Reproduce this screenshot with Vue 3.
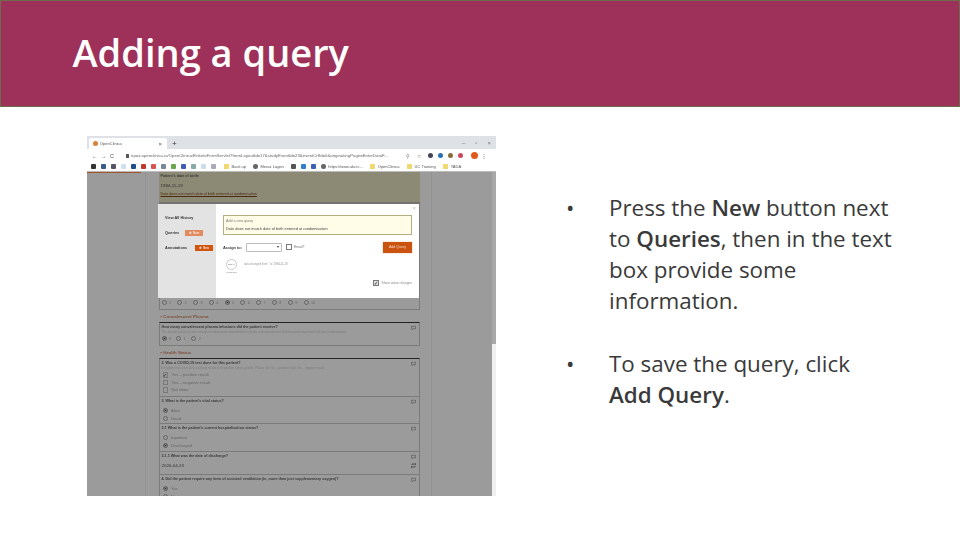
<script setup>
const bookmarks = ['#333', '#3b5a8c', '#556', '#cfe0f0', '#1f4e8c', '#c0392b', '#d9534f', '#789', '#6aa84f', '#3f5fb5', '#8aa', '#cde', '#aab']
const scale = [1, 2, 3, 4, 5, 6, 7, 8, 9, 10]
const vital = [
  { q: '3. What is the patient\'s vital status?', opts: [{ t: 'Alive', on: true }, { t: 'Dead' }], h: 27 },
  { q: '3.1 What is the patient\'s current hospitalisation status?', opts: [{ t: 'Inpatient' }, { t: 'Discharged', on: true }], h: 28 },
]
const tests = ['Yes – positive result', 'Yes – negative result', 'Not done']
</script>

<template>
  <div class="slide">
    <header class="banner">
      <h1>Adding a query</h1>
    </header>
    <main class="content">
      <div class="shot">
        <div class="tabstrip">
          <div class="tab"><span class="fav"></span>OpenClinica<span class="tabx">×</span></div>
          <span class="plus">+</span>
          <span class="winbtns"><i>–</i><i>▫</i><i>×</i></span>
        </div>
        <div class="addr">
          <span class="nav">← → C</span>
          <span class="lock"></span>
          <span class="url">npox.openclinica.io/OpenClinica/EnketoFormServlet?formLayoutId=17&amp;studyEventId=23&amp;eventCrfId=0&amp;originatingPage=EnterDataF...</span>
          <span class="star">⚲</span>
          <span class="star">☆</span>
          <span class="exts"><b class="e1"></b><b class="e2"></b><b class="e3"></b><b class="e4"></b><b class="e5"></b></span>
          <span class="dots">⋮</span>
        </div>
        <div class="marks">
          <span v-for="(c, i) in bookmarks" :key="i" class="mk" :style="{ background: c }"></span>
          <span class="fold"></span><span>Back up</span>
          <span class="globe"></span><span>Meraz Logon</span>
          <span class="mk m2" style="background:#555"></span>
          <span class="mk m3" style="background:#2f80c9"></span>
          <span class="mk m3" style="background:#3f5fb5"></span>
          <span class="globe g2"></span><span>https://www.ukcrc...</span>
          <span class="fold f2"></span><span>OpenClinica</span>
          <span class="fold f2"></span><span>UC Training</span>
          <span class="fold f2"></span><span>TADA</span>
        </div>

        <div class="page">
          <div class="rule"></div>
          <div class="col">
            <div class="form">
              <div class="patient">
                <p class="q">Patient's date of birth:</p>
                <p class="val">1984-11-19</p>
                <p class="err">Date does not match date of birth entered at randomisation</p>
              </div>
              <div class="gaprow">
                <div class="radios">
                  <span v-for="n in scale" :key="n" class="ropt"><i class="radio" :class="{ on: n === 5 }"></i>{{ n }}</span>
                </div>
              </div>

              <div class="section">▪ Convalescent Plasma</div>
              <div class="box plasma">
                <p class="q">How many convalescent plasma infusions did the patient receive?</p>
                <p class="hint">This should include all units infused, including those started before transfer, and any infusions that the patient may have had since randomisation</p>
                <div class="radios">
                  <span v-for="n in [0, 1, 2]" :key="n" class="ropt"><i class="radio" :class="{ on: n === 0 }"></i>{{ n }}</span>
                </div>
                <svg class="cmt" viewBox="0 0 10 10"><path d="M1 2.5h8v5H4L2 9.2V7.500H1z" fill="none" stroke="#4c4c4c" stroke-width="1.100"/></svg>
              </div>

              <div class="section">▪ Health Status</div>
              <div class="box health">
                <p class="q">2. Was a COVID-19 test done for this patient?</p>
                <p class="hint">If multiple tests were done, and any results were positive, select positive. Please tick Yes – positive result, Yes – negative result</p>
                <div v-for="(t, i) in tests" :key="t" class="opt"><i class="check" :class="{ on: i === 0 }">{{ i === 0 ? '✓' : '' }}</i>{{ t }}</div>
                <svg class="cmt" viewBox="0 0 10 10"><path d="M1 2.5h8v5H4L2 9.2V7.500H1z" fill="none" stroke="#4c4c4c" stroke-width="1.100"/></svg>
              </div>
              <div v-for="v in vital" :key="v.q" class="box row" :style="{ height: v.h + 'px' }">
                <p class="q">{{ v.q }}</p>
                <div v-for="o in v.opts" :key="o.t" class="opt"><i class="radio" :class="{ on: o.on }"></i>{{ o.t }}</div>
                <svg class="cmt" viewBox="0 0 10 10"><path d="M1 2.5h8v5H4L2 9.2V7.500H1z" fill="none" stroke="#4c4c4c" stroke-width="1.100"/></svg>
              </div>
              <div class="box row date">
                <p class="q">3.1.1 What was the date of discharge?</p>
                <p class="val">2020-04-23</p>
                <svg class="cmt" viewBox="0 0 10 10"><path d="M1 2.5h8v5H4L2 9.2V7.500H1z" fill="none" stroke="#4c4c4c" stroke-width="1.100"/></svg>
                <svg class="sync" viewBox="0 0 10 10"><path d="M2 4V2h6.500M8.500 0.500L10 2 8.500 3.500M8 6v2H1.500M1.500 6.500L0 8l1.500 1.500M8 2.500V4M2 6V7.500" fill="none" stroke="#333" stroke-width="1.300"/></svg>
              </div>
              <div class="box row last">
                <p class="q">4. Did the patient require any form of assisted ventilation (ie, more than just supplementary oxygen)?</p>
                <div class="opt"><i class="radio on"></i>Yes</div>
                <div class="opt"><i class="radio"></i>No</div>
                <svg class="cmt" viewBox="0 0 10 10"><path d="M1 2.5h8v5H4L2 9.2V7.500H1z" fill="none" stroke="#4c4c4c" stroke-width="1.100"/></svg>
              </div>
            </div>
          </div>
          <div class="scroll"><span class="thumb"></span></div>

          <div class="modal">
            <aside class="side">
              <p class="hist">View All History</p>
              <p class="lab">Queries <span class="btn light">✚ New</span></p>
              <p class="lab">Annotations <span class="btn">✚ New</span></p>
            </aside>
            <div class="mbody">
              <span class="close">×</span>
              <div class="note">
                <p class="ph">Add a new query</p>
                <p class="txt">Date does not match date of birth entered at randomisation</p>
              </div>
              <div class="assign">
                <b>Assign to:</b>
                <span class="sel">▾</span>
                <i class="check small"></i>
                <span class="em">Email?</span>
                <span class="add">Add Query</span>
              </div>
              <div class="log">
                <div class="who"><span class="av">CRAY</span><small>2 minutes</small></div>
                <span class="chg">data changed from '' to '1984-11-19'</span>
              </div>
              <div class="show"><i class="check small on">✓</i>Show value changes</div>
            </div>
          </div>
        </div>
      </div>

      <ul class="points">
        <li>Press the <b>New</b> button next to <b>Queries</b>, then in the text box provide some information.</li>
        <li>To save the query, click <b class="keep">Add Query</b>.</li>
      </ul>
    </main>
  </div>
</template>

<style scoped>
.slide { width: 960px; height: 540px; background: #fff; overflow: hidden; font-family: "Open Sans", sans-serif; }
.banner { height: 107px; box-sizing: border-box; background: #9e3159; border: 1.5px solid #6e6a4c; padding: 28px 0 0 71.500px; }
h1 { margin: 0; color: #fff; font-size: 38px; line-height: 46px; font-weight: 600; }
.content { display: flex; padding: 29px 0 0 87px; }
.shot { position: relative; width: 409px; height: 360px; display: flex; flex-direction: column; overflow: hidden; filter: blur(.5px); font-family: "Liberation Sans", sans-serif; color: #333; }
p { margin: 0; }
i { font-style: normal; }

.tabstrip { height: 13px; background: #dee1e6; display: flex; align-items: flex-end; font-size: 4px; padding-left: 2px; flex: none; }
.tab { width: 78px; height: 11px; background: #fff; border-radius: 2px 2px 0 0; display: flex; align-items: center; gap: 2px; padding-left: 4px; box-sizing: border-box; color: #555; }
.fav { width: 5px; height: 5px; border-radius: 50%; background: #d8813c; }
.tabx { margin-left: auto; margin-right: 5px; font-size: 6px; }
.plus { font-size: 8px; margin: 0 0 1px 5px; color: #333; }
.winbtns { margin-left: auto; display: flex; gap: 10px; padding: 0 5px 3px 0; font-size: 6px; color: #777; }
.addr { height: 13px; background: #fff; display: flex; align-items: center; padding: 0 3px 0 5px; font-size: 4.300px; flex: none; color: #666; }
.nav { font-size: 5.500px; word-spacing: 2px; width: 34px; flex: none; color: #555; }
.lock { width: 3px; height: 4px; background: #555; border-radius: .5px; margin-right: 2px; flex: none; }
.url { white-space: nowrap; overflow: hidden; width: 271px; flex: none; }
.star { width: 11px; text-align: center; font-size: 5px; flex: none; }
.exts { display: flex; gap: 5px; align-items: center; margin-left: 4px; }
.exts b { width: 5px; height: 5px; border-radius: 50%; background: #445; }
.exts .e2 { background: #2a6fb5; }
.exts .e3 { background: #8a6b3a; }
.exts .e4 { background: #d0455c; }
.exts .e5 { background: #e0591b; width: 7px; height: 7px; margin-left: 3px; }
.dots { margin-left: 3px; font-size: 6px; }
.marks { height: 10px; background: #fff; display: flex; align-items: center; gap: 2.500px; padding-left: 4px; font-size: 4px; color: #555; white-space: nowrap; flex: none; border-bottom: .5px solid #bbb; box-sizing: border-box; }
.mk { width: 4.500px; height: 4.500px; border-radius: 1px; margin-right: 3px; flex: none; }
.m2 { margin-left: 5px; }
.fold { width: 5px; height: 4.500px; background: #f1d873; margin-left: 3px; border-radius: .5px; flex: none; }
.f2 { margin-left: 5px; }
.globe { width: 4.500px; height: 4.500px; border-radius: 50%; background: #666; margin-left: 5px; flex: none; }
.g2 { margin-left: 0; }

.page { position: relative; flex: 1; background: #9b9b9b; display: flex; min-height: 0; }
.rule { position: absolute; left: 0; top: 0; width: 54px; height: 1px; background: #a0562a; }
.col { width: 287px; margin-left: 58px; border-left: 1px solid #929292; border-right: 1px solid #929292; height: 100%; box-sizing: border-box; padding-left: 12.500px; flex: none; }
.form { width: 261px; font-size: 3.700px; color: #2d2d2d; }
.scroll { margin-left: auto; width: 4px; background: #efefef; position: relative; }
.thumb { position: absolute; left: 0; top: 0; width: 4px; height: 172px; background: #a8a8a8; }

.patient { height: 32px; box-sizing: border-box; background: #8c8975; padding: 2px 2px; border-bottom: 2px solid #737373; }
.val { font-size: 4.400px; margin-top: 3.500px; color: #333; }
.err { margin-top: 4.500px; color: #4d2b10; text-decoration: underline; }
.q { color: #3a3a3a; font-weight: 700; font-size: 3.700px; line-height: 5px; }
.hint { color: #7d7d7d; font-size: 2.900px; line-height: 4px; }
.gaprow { height: 106px; box-sizing: border-box; padding: 96px 2px 0; border: 1px solid #7b7b7b; border-top: 0; }
.radios { display: flex; gap: 6.400px; color: #666; font-size: 3.600px; }
.ropt { display: flex; align-items: center; gap: 2.400px; }
.radio { display: inline-block; width: 5px; height: 5px; box-sizing: border-box; border: .6px solid #666; border-radius: 50%; flex: none; }
.radio.on { background: #2d2d2d; box-shadow: inset 0 0 0 .7px #9b9b9b; }
.check { display: inline-flex; align-items: center; justify-content: center; width: 5.500px; height: 5.500px; box-sizing: border-box; border: .6px solid #7a7a7a; flex: none; font-size: 5px; color: #222; }

.section { height: 12px; box-sizing: border-box; padding: 4px 2px 0; font-size: 4.400px; font-weight: 700; color: #80513a; line-height: 6px; }
.box { position: relative; border: 1px solid #7b7b7b; border-top-width: 0; box-sizing: border-box; padding: 2px 2px 0; }
.plasma, .health { border-top: 1.400px solid #222; }
.plasma { height: 24px; }
.plasma .radios { margin-top: 2px; gap: 5.500px; }
.health { height: 39px; }
.opt { display: flex; align-items: center; gap: 3.500px; height: 7.500px; color: #666; font-size: 4.200px; padding-left: 1px; }
.hint + .opt { margin-top: 1px; }
.q + .opt { margin-top: 2px; }
.row .opt { height: 8px; }
.cmt { position: absolute; right: 3px; top: 1.500px; width: 5px; height: 5px; }
.sync { position: absolute; right: 3px; top: 11px; width: 5px; height: 5px; }
.date { height: 23px; }
.date .val { margin-top: 4px; }
.last { border-bottom: 0; height: 30px; }

.modal { position: absolute; left: 71px; top: 32px; width: 261px; height: 94px; display: flex; background: #fff; }
.side { width: 58px; background: #e3e3e3; flex: none; padding: 12px 0 0 7px; box-sizing: border-box; font-size: 3.800px; font-weight: 700; color: #333; }
.side .hist { margin-bottom: 9px; line-height: 5px; }
.lab { display: flex; align-items: center; height: 6px; margin-bottom: 8.500px; white-space: nowrap; }
.btn { background: #d2560f; color: #fff; font-size: 3px; font-weight: 400; height: 6px; width: 18px; display: inline-flex; align-items: center; justify-content: center; margin-left: auto; margin-right: 3px; }
.btn.light { background: #e08a5d; margin-left: 6px; }
.mbody { position: relative; flex: 1; padding: 11px 7px 0 7px; min-width: 0; }
.close { position: absolute; right: 3px; top: 1px; color: #bbb; font-size: 6px; }
.note { height: 20px; box-sizing: border-box; background: #fffde8; border: .7px solid #b5ae82; padding: 2px 2px; }
.ph { color: #777; font-size: 3.600px; line-height: 6px; }
.txt { color: #444; font-size: 3.900px; line-height: 7px; margin-top: 1px; }
.assign { display: flex; align-items: center; height: 12px; margin-top: 6px; font-size: 3.900px; color: #333; }
.sel { width: 36px; height: 9px; box-sizing: border-box; border: .6px solid #bbb; border-radius: 1px; margin-left: 4px; display: flex; align-items: center; justify-content: flex-end; padding-right: 2px; font-size: 3.600px; }
.check.small { margin-left: 4px; background: #fff; }
.em { margin-left: 2.500px; color: #777; font-size: 3.400px; }
.add { margin-left: auto; width: 29px; height: 11px; background: #c9530f; color: #f4d9c8; display: flex; align-items: center; justify-content: center; font-size: 3.600px; box-shadow: 0 0 1px #e08a5d; }
.log { display: flex; align-items: flex-start; margin-top: 6px; padding-left: 3px; }
.who { display: flex; flex-direction: column; align-items: center; }
.av { width: 9px; height: 9px; border: .5px solid #ccc; border-radius: 50%; display: flex; align-items: center; justify-content: center; font-size: 2.500px; color: #555; }
.who small { font-size: 2.400px; color: #777; margin-top: 1px; white-space: nowrap; }
.chg { margin: 3px 0 0 7px; color: #999; font-size: 2.800px; }
.show { display: flex; align-items: center; justify-content: flex-end; gap: 3px; margin-top: 6px; color: #888; font-size: 3.300px; }
.show .check { background: #ddd; }

.points { margin: 0 0 0 74px; padding: 56px 0 0; list-style: none; color: #3a3a3a; font-size: 22.400px; line-height: 31px; font-family: "Open Sans", sans-serif; }
.points li { position: relative; margin-left: 39px; padding-bottom: 32px; width: 296px; }
.points li::before { content: "•"; position: absolute; left: -43px; }
.points b { font-weight: 600; }
.keep { white-space: nowrap; }
</style>
